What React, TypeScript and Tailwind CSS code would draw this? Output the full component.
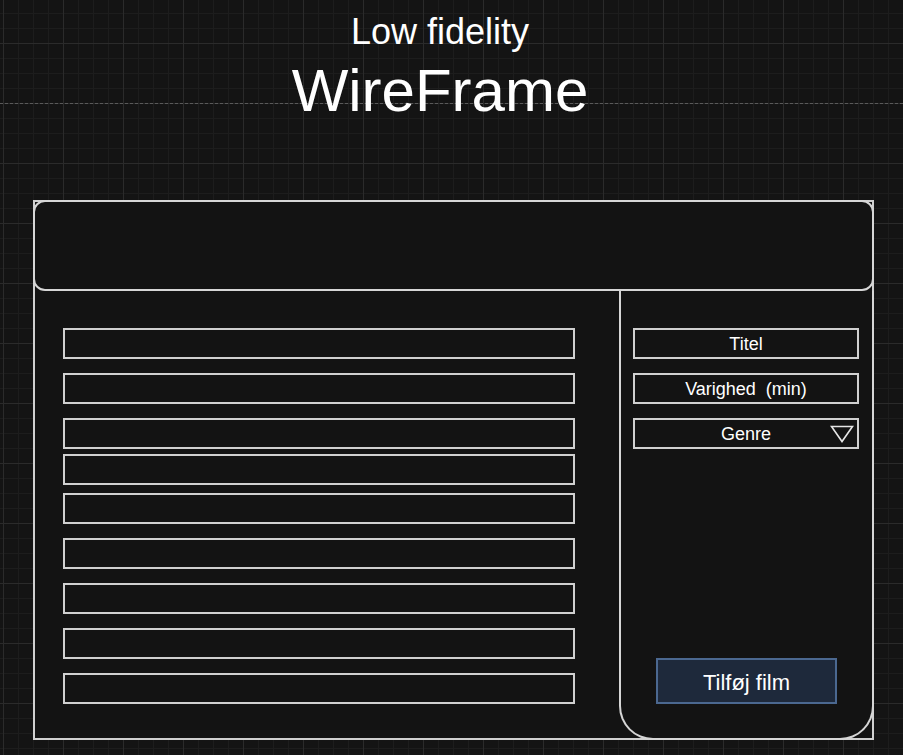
const rowGaps = ["mt-0", "mt-[14px]", "mt-[14px]", "mt-[5px]", "mt-[8px]", "mt-[14px]", "mt-[14px]", "mt-[14px]", "mt-[14px]"];

function Field({ label, dropdown }: { label: string; dropdown?: boolean }) {
  return (
    <div className="relative flex h-[31px] w-[226px] items-center justify-center border-2 border-[#d0d0d0] pt-[1px] text-[18px] leading-none text-white whitespace-pre">
      {label}
      {dropdown && (
        <svg className="absolute right-[3px] top-[5px]" width="24" height="18" viewBox="0 0 24 18">
          <path d="M1.5 1.5 H22.5 L12 16.5 Z" fill="none" stroke="#e6e6e6" strokeWidth="1.6" strokeLinejoin="miter" />
        </svg>
      )}
    </div>
  );
}

export default function App() {
  return (
    <div className="relative h-[755px] w-full overflow-hidden bg-[#141414] bg-[linear-gradient(to_right,#2b2b2b_1px,transparent_1px),linear-gradient(to_bottom,#2b2b2b_1px,transparent_1px),linear-gradient(to_right,#1d1d1d_1px,transparent_1px),linear-gradient(to_bottom,#1d1d1d_1px,transparent_1px)] bg-[size:60px_60px,60px_60px,15px_15px,15px_15px] bg-[position:3px_43px] font-['Liberation_Sans',Arial,sans-serif]">
      {/* guide line */}
      <div className="absolute left-0 right-0 top-[103px] border-t border-dashed border-[#5a5a5a]" />

      <div className="relative flex flex-col items-center pt-[14px] pr-[23px] text-white">
        <p className="text-[36px] leading-[36px]">Low fidelity</p>
        <h1 className="mt-[11px] text-[60px] leading-[60px]">WireFrame</h1>
      </div>

      <div className="relative mt-[79px] ml-[33px] flex h-[540px] w-[841px] flex-col border-2 border-[#d0d0d0] bg-[#131313]">
        <div className="-mx-[2px] -mt-[2px] h-[91px] rounded-[12px] border-2 border-[#d6d6d6]" />

        <div className="flex flex-1">
          <div className="flex flex-1 flex-col pl-[28px] pt-[37px]">
            {rowGaps.map((gap, i) => (
              <div key={i} className={`${gap} h-[31px] w-[512px] border-2 border-[#d0d0d0]`} />
            ))}
          </div>

          <div className="-mb-[2px] -mr-[2px] flex w-[255px] flex-col rounded-b-[34px] border-2 border-t-0 border-[#d6d6d6] pl-[12px] pt-[37px] pb-[34px]">
            <div className="flex flex-col gap-[14px]">
              <Field label="Titel" />
              <Field label="Varighed  (min)" />
              <Field label="Genre" dropdown />
            </div>
            <button className="mt-auto ml-[23px] h-[46px] w-[181px] border-2 border-[#4b6890] bg-[#1e293b] pt-[3px] text-[22px] leading-none text-white">
              Tilføj film
            </button>
          </div>
        </div>
      </div>
    </div>
  );
}
